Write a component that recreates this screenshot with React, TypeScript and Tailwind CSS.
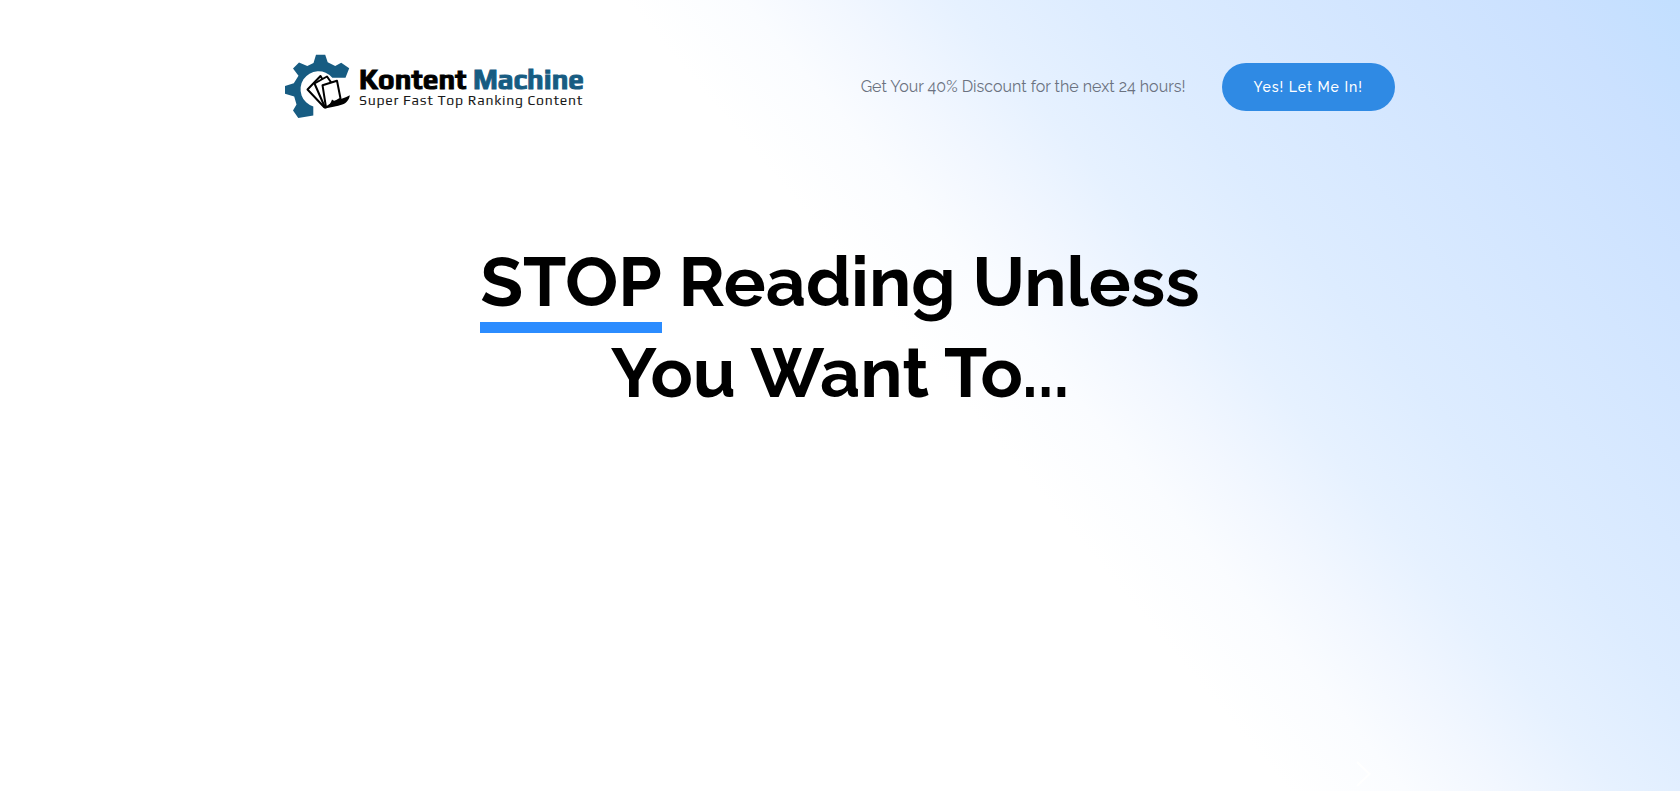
import React from "react";

function LogoMark() {
  return (
    <svg viewBox="0 0 66 66" className="h-[66px] w-[66px] shrink-0" aria-hidden="true">
      <path
        fill="#175c82"
        d="M31 .8h9.200l2.500 7.500 7.500 3.700 6-3.200 8 5.500-3.700 9.400H47.300A18 18 0 1 0 28.300 52.500V61.500L13.300 64 8 56.500l3.500-6-2.300-8L0 39.800V32l8.800-2.700 4.700-7.500L8 14.500l6-6 8.300 3.500 6.200-3z"
      />
      <g fill="#fff" stroke="#000" strokeWidth="2" strokeLinejoin="round">
        <path d="M39 53 22.500 35.500 35.500 22l6 10z" />
        <path d="M40 53.500 29.500 29.500l12.500-7 7 10z" />
        <path d="M41 53.500 37.500 31.200 52 26.700l3.500 17.800-10 6z" />
      </g>
      <path
        fill="#000"
        d="M38.500 54.500c4-1.500 7-4 8.500-9 1.500 1.300 3 1.500 5 .7 4-1.500 8-2 12.800-5-.5 4.500-3.500 8-7.500 9.300-5 1.600-12 3.300-18.800 4z"
      />
    </svg>
  );
}

function Logo() {
  return (
    <a href="#" className="flex items-center gap-2">
      <LogoMark />
      <span className="flex flex-col gap-px font-['Play','Exo_2',Roboto,sans-serif]">
        <span className="whitespace-nowrap text-[28px] leading-6 font-bold text-black [-webkit-text-stroke:1px]">
          Kontent <span className="text-[#175c82]">Machine</span>
        </span>
        <span className="whitespace-nowrap text-[14px] leading-4 tracking-wider text-[#1a1a1a]">
          Super Fast Top Ranking Content
        </span>
      </span>
    </a>
  );
}

export default function App() {
  return (
    <div className="flex min-h-screen flex-col bg-[linear-gradient(50deg,#fff_55%,#fafcff_60%,#f2f7ff_64%,#e6f1ff_69%,#ddecff_75%,#cbe1ff_94%,#c2dfff_100%)] font-['Raleway',Lato,sans-serif]">
      {/* Header */}
      <header className="mx-auto flex w-full max-w-[1140px] items-center justify-between px-[15px] pt-[54px]">
        <Logo />
        <div className="flex items-center gap-9">
          <p className="text-base text-[#6b7280] [font-variant-numeric:oldstyle-nums]">
            Get Your 40% Discount for the next 24 hours!
          </p>
          <button
            type="button"
            className="h-12 rounded-full bg-[#2f8ae4] px-8 text-sm font-medium tracking-[1px] text-white"
          >
            Yes! Let Me In!
          </button>
        </div>
      </header>

      {/* Headline */}
      <main className="mx-auto flex w-full max-w-[1140px] grow flex-col px-[15px] pt-[116px]">
        <h1 className="text-center text-[70px] leading-[91px] font-bold text-black">
          <span className="-mb-1.5 inline-block h-[97px] border-b-[11px] border-[#2b8cff] align-top">STOP</span> Reading Unless
          <br />
          You Want To...
        </h1>

        <div className="mt-auto flex justify-end pr-6 pb-1">
          <button type="button" aria-label="Next">
            <svg viewBox="0 0 15 26" className="h-[26px] w-[15px]" fill="none" stroke="#fff" strokeWidth="2">
              <path d="M1 1l12.500 12L1 25" />
            </svg>
          </button>
        </div>
      </main>
    </div>
  );
}
